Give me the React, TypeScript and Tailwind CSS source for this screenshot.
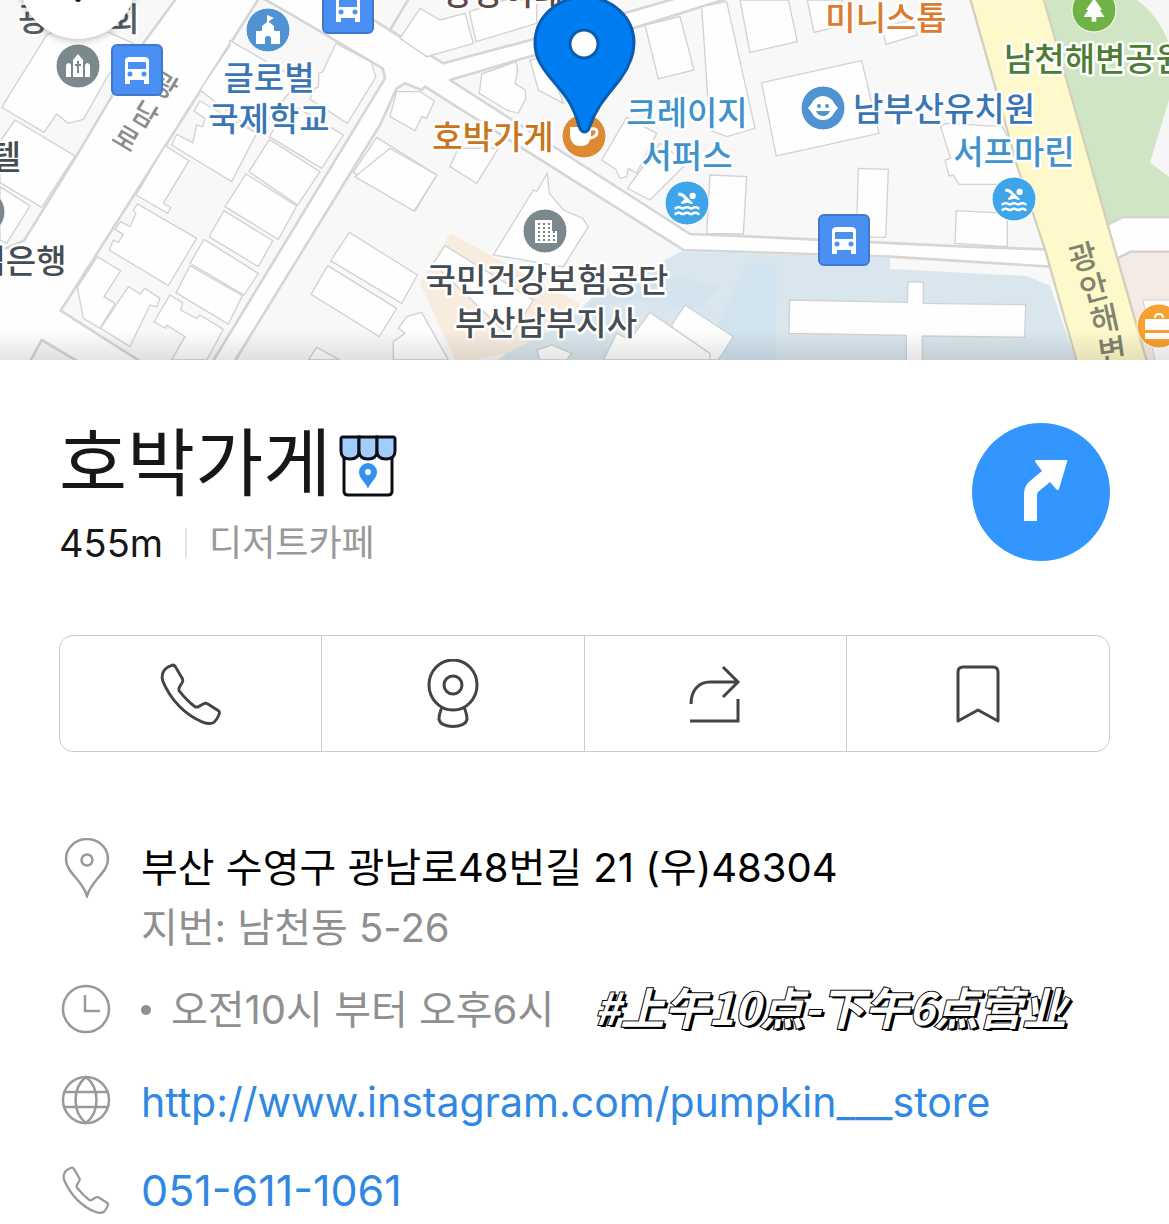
import React from "react";
import { MdPark, MdPool } from "react-icons/md";

type LabelProps = {
  x: number;
  y: number;
  color: string;
  children: string;
};

// 지도 위 장소 이름
const MapLabel: React.FC<LabelProps> = ({ x, y, color, children }) => (
  <text
    x={x}
    y={y}
    fill={color}
    stroke="white"
    strokeWidth={5}
    strokeLinejoin="round"
    paintOrder="stroke"
    textAnchor="middle"
    className="text-[33px] font-medium"
  >
    {children}
  </text>
);

const BusStop: React.FC<{ x: number; y: number }> = ({ x, y }) => (
  <g transform={`translate(${x} ${y})`}>
    <rect x={-25} y={-25} width={50} height={50} rx={5} fill="#4a90f2" stroke="#3f79cf" strokeWidth={2} />
    <path d="M-12 -9Q-12 -13 -7 -13H7Q12 -13 12 -9V14H7V10H-7V14H-12Z" fill="white" />
    <path d="M-9 -8H9V-1H-9Z" fill="#4a90f2" />
    <circle cx={-7} cy={4} r={2.500} fill="#4a90f2" />
    <circle cx={7} cy={4} r={2.500} fill="#4a90f2" />
  </g>
);

const Marker: React.FC<{ x: number; y: number; color: string; children: React.ReactNode }> = ({
  x,
  y,
  color,
  children,
}) => (
  <g transform={`translate(${x} ${y})`}>
    <circle r={22} fill={color} stroke="white" strokeWidth={1} />
    {children}
  </g>
);

// 건물 외곽선 (서쪽)
const westBuildings = [
  "5,322 140,105 240,60 400,130 325,225 250,358 205,370 170,342 132,397",
  "45,360 225,468 125,622 0,548 0,425",
  "0,560 90,618 20,730 0,720",
  "690,122 800,185 900,240 850,300 770,400 600,270 690,137",
  "600,303 770,400 695,545 515,435 530,403 578,428 590,375 608,380 615,355 582,333",
  "1008,130 1115,187 1127,232 1042,370 930,297 945,265 955,262 957,220 968,215",
  "495,437 567,482 490,610 512,622 503,640 408,585",
  "870,310 1030,405 965,505 808,410",
  "808,418 960,515 893,615 747,515",
  "738,522 890,618 835,718 675,620",
  "672,632 818,722 775,800 627,710",
  "612,718 775,820 732,885 570,790",
  "570,797 727,887 685,972 528,878",
  "362,665 390,680 408,640 400,632 412,612 590,715 505,857 328,750 340,720 355,727 370,703 345,688",
  "292,770 362,812 312,890 345,910 300,985 250,955 232,862",
  "385,860 420,882 435,865 480,895 470,920 450,915 390,1040 302,985",
  "510,885 548,908 542,930 590,955 600,945 670,988 620,1080 515,1080 555,1010 500,975 497,985 462,965",
  "1130,412 1310,525 1245,633 1060,517",
  "1048,697 1252,825 1205,910 992,782",
  "983,797 1190,925 1138,1010 933,883",
  "950,1042 1020,1080 925,1080",
];

// 건물 외곽선 (가운데)
const centerBuildings = [
  "30,115 90,25 150,60 225,40 250,130 110,170",
  "238,35 345,0 440,0 440,70 258,125",
  "20,275 90,275 133,303 110,355 95,350 75,392 0,350",
  "275,222 378,185 383,210 375,250 405,270 408,295 385,340 350,330 268,280",
  "420,180 470,170 520,310 445,270",
  "205,445 325,445 260,550 180,500",
  "0,445 140,525 72,633 -105,530",
  "472,520 478,580 520,630 578,655 595,680 520,800 310,765 430,570 440,575",
  "165,737 430,900 360,1010 130,790",
  "765,75 870,50 912,210 805,237",
  "935,20 1010,5 1095,385 1010,410 960,390",
  "1050,0 1080,157 1222,125 1195,0",
  "710,352 800,400 740,520 715,505 710,530 690,535 678,508 635,480",
  "810,430 890,490 780,600 712,565",
  "960,525 1070,530 1060,702 950,700",
  "10,1025 45,1000 25,985 50,950 95,937 175,1080 10,1080",
  "885,915 1030,1010 985,1080 900,1080 845,975",
  "780,937 960,1060 960,1080 640,1080 680,1000 720,1020",
  "440,1050 485,1035 545,1060 530,1080 450,1080",
];

// 건물 외곽선 (동쪽)
const eastBuildings = [
  "115,0 135,97 230,75 220,0",
  "340,80 350,133 445,105 430,60",
  "-22,248 278,182 330,400 22,468",
  "268,505 358,508 350,712 262,710",
  "515,380 530,370 700,380 760,500 790,553 570,553 553,525 540,528 528,480 545,475",
  "562,632 715,640 715,740 558,730",
  "62,900 415,907 417,845 463,847 463,910 770,914 767,1012 460,1008 460,1090 412,1090 412,1006 60,1000",
];

const Buildings: React.FC<{ shapes: string[] }> = ({ shapes }) => (
  <g fill="#fefefe" stroke="#d2d2d2" strokeWidth={4}>
    {shapes.map((points) => (
      <polygon key={points} points={points} />
    ))}
  </g>
);

const MapView: React.FC = () => (
  <svg
    viewBox="0 0 1169 360"
    preserveAspectRatio="xMidYMid slice"
    className="block w-full h-[360px] bg-[#fefefe] font-['Noto_Sans_CJK_KR',sans-serif]"
    role="img"
    aria-label="지도"
  >
    <defs>
      <linearGradient id="sheetShade" x1="0" y1="0" x2="0" y2="1">
        <stop offset="0" stopColor="#000" stopOpacity="0" />
        <stop offset="1" stopColor="#000" stopOpacity="0.1" />
      </linearGradient>
      <filter id="soft" x="-30%" y="-30%" width="160%" height="160%">
        <feGaussianBlur stdDeviation="4" />
      </filter>
    </defs>

    <g transform="scale(0.33333)">
      {/* 블록 */}
      <g fill="#f8f8f8" stroke="#d6d6d6" strokeWidth={8} strokeLinejoin="round">
        <polygon points="-20,-20 540,-20 430,130 225,475 72,722 -20,760" />
        <polygon points="780,-10 182,932 430,1090 635,1090 1155,235 1148,205 885,50" />
        <polygon points="90,1085 125,1020 235,1085" />
        <polygon points="1150,-10 1010,-10 1200,110 1245,-10" />
        <polygon points="1230,-10 1170,90 1330,190 1610,115 2150,-40" />
        <polygon points="1350,240 1560,178 1900,85 2200,-10 2910,-10 2987,260 3067,500 3135,748 2900,740 2307,712 2070,702" />
        <polygon points="700,1090 1140,375 1190,265 1215,250 1265,270 1275,260 2050,750 2670,770 3152,800 3235,1090" />
      </g>
      {/* 바다와 모래 */}
      <polygon points="1350,700 1590,830 1740,910 1720,960 1520,1060 1370,1090 1260,850" fill="#f8ecdf" />
      <polygon
        points="2040,755 2670,772 2670,807 2960,822 3080,828 3150,857 3230,1090 1480,1090 1520,1060 1710,960 1790,880 1960,800"
        fill="#d9e6ed"
      />
      <polygon points="2240,790 2330,790 2325,1090 2180,1090 2140,1000" fill="#d1e3ee" />
      <polygon points="1790,880 2040,830 2160,860 2100,930 1900,900 1740,930" fill="#d4e4ee" />
      <Buildings shapes={westBuildings} />
      <g transform="translate(1170 0)">
        <Buildings shapes={centerBuildings} />
      </g>
      <g transform="translate(2307 0)">
        <Buildings shapes={eastBuildings} />
        {/* 공원 */}
        <polygon points="1100,0 1220,0 1220,540 1143,487" fill="#f6f6f6" />
        <path
          d="M825 -10H1090C1150 30 1185 80 1210 160L1200 300L1143 487L1220 545V652H1060L1015 675Z"
          fill="#cfe5c4"
        />
        <path d="M1015 675L1060 652H1220" fill="none" stroke="#d4d4d4" strokeWidth={7} />
        <polygon points="1045,775 1085,755 1220,755 1220,1090 1135,1090" fill="#f4ebe4" stroke="#d0d0d0" strokeWidth={7} />
        <polygon points="1122,900 1220,900 1220,1090 1160,1090" fill="#fdfdfd" stroke="#d0d0d0" strokeWidth={3} />
        {/* 광안해변로 */}
        <path
          d="M602 -10H822L1015 670L1135 1090H925L828 748L745 500L680 265Z"
          fill="#fef9ca"
          stroke="#d5d0bd"
          strokeWidth={7}
        />
      </g>
    </g>

    {/* 도로명 */}
    <g className="text-[27px] font-medium" fill="#8b8b8b" textAnchor="middle">
      <text transform="translate(160 94) rotate(31)">광</text>
      <text transform="translate(140 123) rotate(31)">남</text>
      <text transform="translate(121 147) rotate(31)">로</text>
    </g>
    <g className="text-[31px] font-medium" fill="#83836f" textAnchor="middle">
      <text transform="translate(1086 268) rotate(-15)">광</text>
      <text transform="translate(1097 299) rotate(-15)">안</text>
      <text transform="translate(1107 330) rotate(-12)">해</text>
      <text transform="translate(1114 362) rotate(-8)">변</text>
    </g>

    <MapLabel x={79} y={31} color="#555c60">광안교회</MapLabel>
    <MapLabel x={503} y={5} color="#5c4a46">강강이네</MapLabel>
    <MapLabel x={269} y={90} color="#3a76b5">글로벌</MapLabel>
    <MapLabel x={269} y={131} color="#3a76b5">국제학교</MapLabel>
    <MapLabel x={6} y={169} color="#454d52">텔</MapLabel>
    <MapLabel x={21} y={273} color="#454d52">업은행</MapLabel>
    <MapLabel x={493} y={149} color="#c9751c">호박가게</MapLabel>
    <MapLabel x={687} y={125} color="#3f92cb">크레이지</MapLabel>
    <MapLabel x={687} y={168} color="#3f92cb">서퍼스</MapLabel>
    <MapLabel x={547} y={292} color="#454d52">국민건강보험공단</MapLabel>
    <MapLabel x={546} y={335} color="#454d52">부산남부지사</MapLabel>
    <MapLabel x={886} y={30} color="#dd7a2e">미니스톱</MapLabel>
    <MapLabel x={944} y={121} color="#3a76b5">남부산유치원</MapLabel>
    <MapLabel x={1014} y={164} color="#3f92cb">서프마린</MapLabel>
    <MapLabel x={1095} y={71} color="#4d7d33">남천해변공원</MapLabel>

    <BusStop x={137} y={70} />
    <BusStop x={348} y={8} />
    <BusStop x={844} y={240} />

    {/* 교회 */}
    <Marker x={78} y={66} color="#7b898f">
      <path
        d="M-12 11V-1Q-9 -5 -7 -1V11ZM-5 11V-6L0 -12L5 -6V11ZM7 11V-1Q9 -5 12 -1V11Z"
        fill="white"
      />
      <path d="M0 -5V7M-3 -1H3" stroke="#7b898f" strokeWidth={2} />
    </Marker>
    <Marker x={-17} y={212} color="#7b898f">
      <circle r={6} fill="white" />
    </Marker>
    {/* 학교 */}
    <Marker x={268} y={30} color="#4f93d3">
      <path
        d="M-1 -15L6 -12L1 -9V-8L6 -4V1H12V14H3V9A3 3 0 0 0 -3 9V14H-12V1H-6V-4L-1 -8Z"
        fill="white"
      />
    </Marker>
    {/* 유치원 */}
    <Marker x={823} y={108} color="#4f93d3">
      <circle r={12} fill="white" />
      <path d="M-11 -5L-15 0L-11 5ZM11 -5L15 0L11 5Z" fill="white" />
      <circle cx={-4} cy={-2} r={2} fill="#4f93d3" />
      <circle cx={4} cy={-2} r={2} fill="#4f93d3" />
      <path d="M-7 3H7Q5 8 0 8Q-5 8 -7 3Z" fill="#4f93d3" />
    </Marker>
    <Marker x={687} y={203} color="#3ea6e8">
      <MdPool x={-15} y={-14} size={30} color="white" />
    </Marker>
    <Marker x={1014} y={199} color="#3ea6e8">
      <MdPool x={-15} y={-14} size={30} color="white" />
    </Marker>
    <Marker x={1094} y={10} color="#6fb245">
      <MdPark x={-14} y={-14} size={28} color="white" />
    </Marker>
    {/* 카페 */}
    <Marker x={584} y={136} color="#dd8a35">
      <path d="M-14 -9H7V0Q6 10 -3 10Q-13 10 -14 0Z" fill="white" />
      <path d="M7 -7Q13 -8 13 -4Q13 1 6 2" fill="none" stroke="white" strokeWidth={3} />
    </Marker>
    {/* 건물 */}
    <Marker x={545} y={231} color="#7b898f">
      <path d="M-10 -11H7V0H12V12H-10Z" fill="white" />
      <path
        d="M-7 -7H6M-7 -3H6M-7 1H10M-7 5H10M-7 9H10"
        stroke="#7b898f"
        strokeWidth={2}
        strokeDasharray="2 3"
      />
    </Marker>
    <Marker x={1159} y={326} color="#f7a12f">
      <path d="M-14 -7H14V4H-14ZM-14 7H14V13H-14Z" fill="white" />
      <path d="M-4 -8Q-4 -12 0 -12Q4 -12 4 -8" fill="none" stroke="white" strokeWidth={2} />
    </Marker>

    {/* 선택한 장소 */}
    <path
      d="M584.500 132C581 132 580 129 579 126C572 100 561 91 549 76C540 65 535 56 535 43A49.500 46 0 0 1 634 43C634 56 628 68 621 78C609 94 597 105 590 126C589 129 588 132 584.500 132Z"
      fill="#007df0"
      stroke="#0a5cb0"
      strokeWidth={3}
    />
    <circle cx={584} cy={44} r={14} fill="white" stroke="#0a5cb0" strokeWidth={3} />

    {/* 뒤로가기 버튼 */}
    <circle cx={78} cy={-18} r={58} fill="#000" opacity={0.3} filter="url(#soft)" />
    <circle cx={78} cy={-19} r={58} fill="white" />
    <circle cx={78} cy={-1} r={3} fill="#111" />

    <rect y={330} width={1169} height={30} fill="url(#sheetShade)" />
  </svg>
);

const PhoneIcon: React.FC<{ className: string; strokeWidth: number }> = ({ className, strokeWidth }) => (
  <svg
    viewBox="0 0 64 64"
    className={className}
    fill="none"
    stroke="currentColor"
    strokeWidth={strokeWidth}
    strokeLinejoin="round"
    aria-hidden="true"
  >
    <path d="M11 3Q14 1 16 4L23 16Q24 18 23 20L20 25Q19 27 20 29Q28 39 36 45Q38 46 40 45L45 42Q47 41 49 42L60 49Q62 50 61 53C60 56 58 59 56 61Q52 64 44 61C26 54 11 38 3 19Q1 13 4 8Q7 4 11 3Z" />
  </svg>
);

const StoreIcon: React.FC = () => (
  <svg viewBox="0 0 58 62" className="w-[58px] h-[62px]" stroke="#0b0f14" strokeWidth={3} aria-hidden="true">
    <path d="M5 20V56Q5 60 9 60H49Q53 60 53 56V20" fill="white" />
    <path d="M2 4Q2 2 4 2H20V16Q20 24 11 24Q2 24 2 16Z" fill="#a3cbfb" />
    <path d="M20 2H38V16Q38 24 29 24Q20 24 20 16Z" fill="#a3cbfb" />
    <path d="M38 2H54Q56 2 56 4V16Q56 24 47 24Q38 24 38 16Z" fill="#a3cbfb" />
    <path
      d="M29 54C27 47 20 44 20 37A9 9 0 0 1 38 37C38 44 31 47 29 54ZM29 34A3 3 0 0 0 29 40A3 3 0 0 0 29 34Z"
      fill="#3190f0"
      stroke="none"
    />
  </svg>
);

const App: React.FC = () => {
  return (
    <div className="w-full bg-white text-[#171717] font-[Inter,'Noto_Sans_CJK_KR',sans-serif]">
      <MapView />

      <main className="px-[59px] pb-1">
        {/* 장소 이름, 길찾기 */}
        <header className="flex items-start justify-between pt-[63px]">
          <div>
            <div className="flex items-end gap-2 h-[80px]">
              <h1 className="text-[74px] leading-[80px]">호박가게</h1>
              <div className="pb-[6px]">
                <StoreIcon />
              </div>
            </div>
            <div className="flex items-center mt-4 h-[48px]">
              <span className="text-[38px]">455m</span>
              <span className="w-[2px] h-[30px] mx-[22px] bg-[#e4e4e4]" />
              <span className="text-[36px] text-[#999999]">디저트카페</span>
            </div>
          </div>
          <button
            type="button"
            aria-label="길찾기"
            className="flex items-center justify-center w-[138px] h-[138px] rounded-full bg-[#3396ff]"
          >
            <svg viewBox="0 0 138 138" className="w-full h-full" fill="white" aria-hidden="true">
              <path d="M64 37H94Q96 37 95 39L87 66Q86 68 84 66L78 59L66 69Q65 70 65 72V98H52V71Q52 63 58 58L70 48L64 40Q62 37 64 37Z" />
            </svg>
          </button>
        </header>

        {/* 버튼 4개 */}
        <div className="grid grid-cols-4 mt-[68px] h-[117px] border border-[#cccccc] rounded-[14px] divide-x divide-[#cccccc] text-[#444444]">
          <button type="button" aria-label="전화" className="flex items-center justify-center">
            <PhoneIcon className="w-[62px] h-[62px]" strokeWidth={3} />
          </button>
          <button type="button" aria-label="로드뷰" className="flex items-center justify-center">
            <svg viewBox="0 0 54 70" className="w-[54px] h-[70px]" fill="none" stroke="currentColor" strokeWidth={3} aria-hidden="true">
              <ellipse cx={27} cy={26} rx={24} ry={25} />
              <circle cx={27} cy={26} r={9} />
              <path d="M16 48C14 53 13 56 13 60C14 70 40 70 41 60C41 56 40 53 38 48" />
            </svg>
          </button>
          <button type="button" aria-label="공유" className="flex items-center justify-center">
            <svg viewBox="0 0 54 60" className="w-[54px] h-[60px]" fill="none" stroke="currentColor" strokeWidth={3} aria-hidden="true">
              <path d="M3 40C3 26 11 18 22 18H50M35 3L50 18L35 33M50 35V57H2" />
            </svg>
          </button>
          <button type="button" aria-label="저장" className="flex items-center justify-center">
            <svg viewBox="0 0 46 60" className="w-[46px] h-[60px]" fill="none" stroke="currentColor" strokeWidth={3} strokeLinejoin="round" aria-hidden="true">
              <path d="M3 57V8Q3 3 8 3H38Q43 3 43 8V57L23 46Z" />
            </svg>
          </button>
        </div>

        {/* 상세 정보 */}
        <ul className="mt-[86px] text-[40px] leading-[60px] text-[#8f8f8f]">
          <li className="flex gap-7">
            <svg viewBox="0 0 54 60" className="w-[54px] h-[60px] shrink-0" fill="none" stroke="#999999" strokeWidth={2.500} aria-hidden="true">
              <path d="M28 58C23 41 7 35 7 21A21 20 0 0 1 49 21C49 35 33 41 28 58Z" />
              <circle cx={28} cy={22} r={5.500} />
            </svg>
            <div>
              <p className="text-black">부산 수영구 광남로48번길 21 (우)48304</p>
              <p>지번: 남천동 5-26</p>
            </div>
          </li>
          <li className="flex gap-7 mt-[22px]">
            <svg viewBox="0 0 54 60" className="w-[54px] h-[60px] shrink-0" fill="none" stroke="#999999" strokeWidth={2.500} aria-hidden="true">
              <circle cx={27} cy={29} r={23} />
              <path d="M26 15V31H41" />
            </svg>
            <div className="flex items-center h-[60px]">
              <span className="w-[10px] h-[10px] mr-5 rounded-full bg-[#8f8f8f]" />
              <span>오전10시 부터 오후6시</span>
              <em className="ml-10 pb-2 text-[44px] leading-[52px] font-bold text-white [-webkit-text-stroke:2px_black] [paint-order:stroke] [text-shadow:1px_1px_0_black,2px_2px_0_black,3px_2px_0_black] font-['Noto_Sans_CJK_SC',sans-serif]">
                #上午10点-下午6点营业
              </em>
            </div>
          </li>
          <li className="flex gap-7 mt-8">
            <svg viewBox="0 0 54 60" className="w-[54px] h-[60px] shrink-0" fill="none" stroke="#999999" strokeWidth={2.500} aria-hidden="true">
              <circle cx={27} cy={28} r={23} />
              <path d="M27 5C13 16 13 40 27 51C41 40 41 16 27 5ZM6 20H48M6 35H48" />
            </svg>
            <a href="http://www.instagram.com/pumpkin___store" className="text-[41px] text-[#3088e2]">
              http://www.instagram.com/pumpkin___store
            </a>
          </li>
          <li className="flex gap-7 mt-7">
            <span className="flex items-center justify-center w-[54px] h-[60px] shrink-0">
              <PhoneIcon className="w-[48px] h-[48px] text-[#999999]" strokeWidth={3} />
            </span>
            <a href="tel:051-611-1061" className="text-[43px] text-[#3088e2]">
              051-611-1061
            </a>
          </li>
        </ul>
      </main>
    </div>
  );
};

export default App;
